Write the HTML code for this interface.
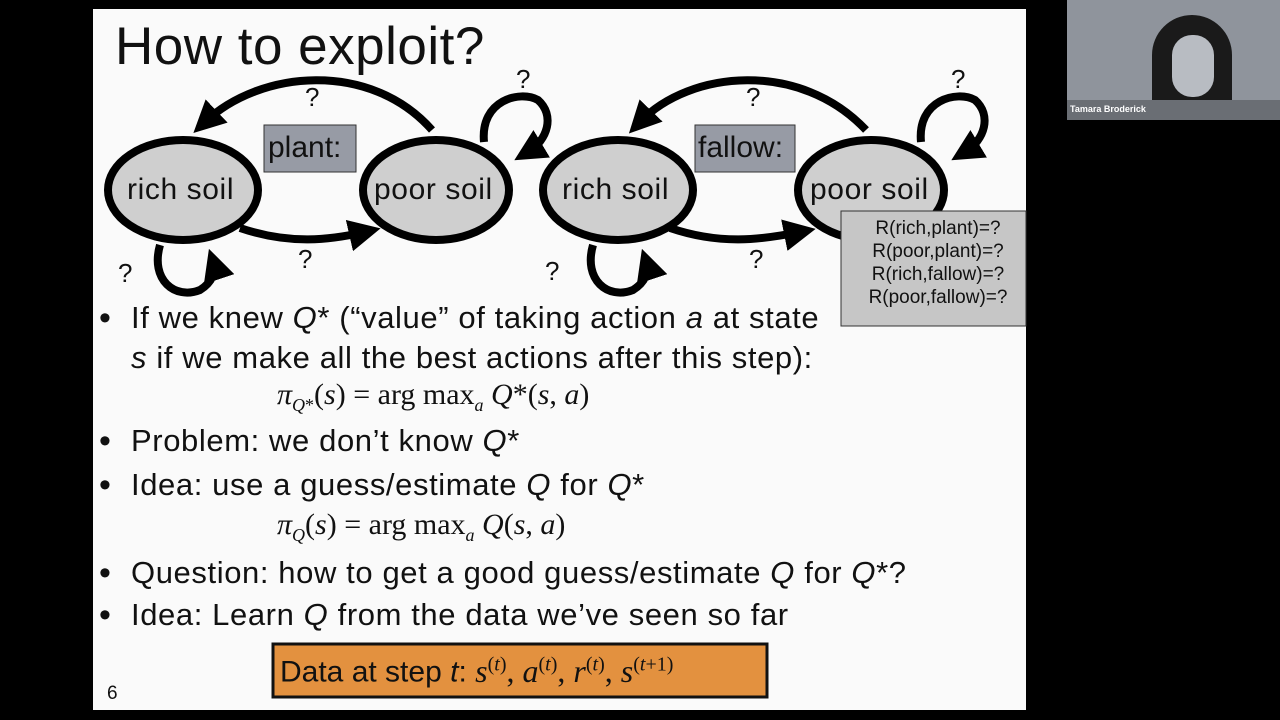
<!DOCTYPE html>
<html><head><meta charset="utf-8"><style>
html,body{margin:0;padding:0;width:1280px;height:720px;background:#000;overflow:hidden;font-family:"Liberation Sans",sans-serif}
.slide{position:absolute;left:93px;top:9px;width:933px;height:701px;background:#fafafa}
.t{position:absolute;white-space:nowrap;color:#111;font-size:31px;line-height:1;letter-spacing:0.6px}
.b{position:absolute;left:99px;font-size:34px;line-height:1;color:#111}
.m{font-family:"Liberation Serif",serif;font-style:italic}
.r{font-family:"Liberation Serif",serif;letter-spacing:0}
</style></head><body>
<div class="slide"></div>
<svg style="position:absolute;left:0;top:0" width="1280" height="720">
<defs><marker id="ah" markerWidth="4" markerHeight="4" refX="2" refY="2" orient="auto" markerUnits="strokeWidth"><path d="M0,0L4,2L0,4z" fill="#000"/></marker></defs>
<g stroke="#000" stroke-width="8" fill="none">
<path d="M432,130 C370,60 260,70 205,122" marker-end="url(#ah)"/>
<path d="M240,228 C290,245 330,240 365,232" marker-end="url(#ah)"/>
<path d="M484,142 C480,100 520,90 538,100 C555,115 548,140 528,152" marker-end="url(#ah)"/>
<path d="M160,245 C150,280 175,300 200,290 C213,282 216,270 214,264" marker-end="url(#ah)"/>
<path d="M866,130 C800,60 690,70 640,122" marker-end="url(#ah)"/>
<path d="M670,228 C720,245 760,240 800,232" marker-end="url(#ah)"/>
<path d="M921,142 C917,100 957,90 975,100 C992,115 985,140 965,152" marker-end="url(#ah)"/>
<path d="M593,245 C583,280 608,300 633,290 C646,282 649,270 647,264" marker-end="url(#ah)"/>
</g>
<g stroke="#000" stroke-width="8" fill="#cfcfcf">
<ellipse cx="183" cy="190" rx="75" ry="50"/>
<ellipse cx="436" cy="190" rx="73" ry="50"/>
<ellipse cx="618" cy="190" rx="75" ry="50"/>
<ellipse cx="871" cy="190" rx="73" ry="50"/>
</g>
<rect x="264" y="125" width="92" height="47" fill="#979ba5" stroke="#333" stroke-width="1"/>
<rect x="695" y="125" width="100" height="47" fill="#979ba5" stroke="#333" stroke-width="1"/>
<rect x="841" y="211" width="185" height="115" fill="#c6c6c6" stroke="#333" stroke-width="1"/>
<rect x="273" y="644" width="494" height="53" fill="#e3913f" stroke="#111" stroke-width="3"/>
</svg>
<div class="t" style="left:115px;top:20px;font-size:53px;letter-spacing:0.5px">How to exploit?</div>
<div class="t" style="left:268px;top:133px;font-size:30px;letter-spacing:0">plant:</div>
<div class="t" style="left:698px;top:133px;font-size:30px;letter-spacing:0">fallow:</div>
<div class="t" style="left:127px;top:175px;font-size:30px;letter-spacing:0.6px">rich soil</div>
<div class="t" style="left:374px;top:175px;font-size:30px;letter-spacing:0.6px">poor soil</div>
<div class="t" style="left:562px;top:175px;font-size:30px;letter-spacing:0.6px">rich soil</div>
<div class="t" style="left:810px;top:175px;font-size:30px;letter-spacing:0.6px">poor soil</div>
<div class="t" style="left:305px;top:84px;font-size:26px">?</div>
<div class="t" style="left:516px;top:66px;font-size:26px">?</div>
<div class="t" style="left:298px;top:246px;font-size:26px">?</div>
<div class="t" style="left:118px;top:260px;font-size:26px">?</div>
<div class="t" style="left:746px;top:84px;font-size:26px">?</div>
<div class="t" style="left:951px;top:66px;font-size:26px">?</div>
<div class="t" style="left:749px;top:246px;font-size:26px">?</div>
<div class="t" style="left:545px;top:258px;font-size:26px">?</div>
<div class="t" style="left:858px;top:217px;font-size:19px;line-height:23px;text-align:center;width:160px;letter-spacing:0">R(rich,plant)=?<br>R(poor,plant)=?<br>R(rich,fallow)=?<br>R(poor,fallow)=?</div>
<div class="b" style="top:301px">•</div>
<div class="t" style="left:131px;top:302px">If we knew <i>Q</i>* (“value” of taking action <i>a</i> at state</div>
<div class="t" style="left:131px;top:342px"><i>s</i> if we make all the best actions after this step):</div>
<div class="t r" style="left:277px;top:380px;font-size:30px"><i>π</i><sub style="font-size:18px"><i>Q</i>*</sub>(<i>s</i>) = arg max<sub style="font-size:18px"><i>a</i></sub> <i>Q</i>*(<i>s</i>, <i>a</i>)</div>
<div class="b" style="top:424px">•</div>
<div class="t" style="left:131px;top:425px">Problem: we don’t know <i>Q</i>*</div>
<div class="b" style="top:468px">•</div>
<div class="t" style="left:131px;top:469px">Idea: use a guess/estimate <i>Q</i> for <i>Q</i>*</div>
<div class="t r" style="left:277px;top:510px;font-size:30px"><i>π</i><sub style="font-size:18px"><i>Q</i></sub>(<i>s</i>) = arg max<sub style="font-size:18px"><i>a</i></sub> <i>Q</i>(<i>s</i>, <i>a</i>)</div>
<div class="b" style="top:556px">•</div>
<div class="t" style="left:131px;top:557px">Question: how to get a good guess/estimate <i>Q</i> for <i>Q</i>*?</div>
<div class="b" style="top:598px">•</div>
<div class="t" style="left:131px;top:599px">Idea: Learn <i>Q</i> from the data we’ve seen so far</div>
<div class="t" style="left:280px;top:654px;font-size:30px;letter-spacing:0">Data at step <i>t</i>: <span class="r" style="font-size:32px"><i>s</i><sup style="font-size:20px">(<i>t</i>)</sup>, <i>a</i><sup style="font-size:20px">(<i>t</i>)</sup>, <i>r</i><sup style="font-size:20px">(<i>t</i>)</sup>, <i>s</i><sup style="font-size:20px">(<i>t</i>+1)</sup></span></div>
<div class="t" style="left:107px;top:684px;font-size:19px">6</div>
<div style="position:absolute;left:1067px;top:0;width:213px;height:120px;background:#8f949c;overflow:hidden">
<div style="position:absolute;left:85px;top:15px;width:80px;height:105px;background:#1a1a1a;border-radius:40px 40px 10px 10px"></div>
<div style="position:absolute;left:105px;top:35px;width:42px;height:62px;background:#b8bcc2;border-radius:20px"></div>
<div style="position:absolute;left:0;top:100px;width:213px;height:20px;background:#6a6e74"></div>
<div style="position:absolute;left:3px;top:104px;color:#fff;font-size:9px;font-weight:bold">Tamara Broderick</div>
</div>
</body></html>
